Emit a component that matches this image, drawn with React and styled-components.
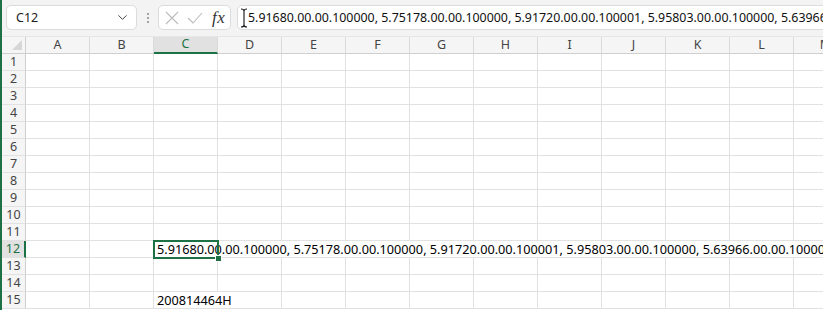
import React from "react";
import styled, { createGlobalStyle, css } from "styled-components";
import { ChevronDown } from "lucide-react";

const GREEN = "#1e7145";
const COLUMNS = ["A", "B", "C", "D", "E", "F", "G", "H", "I", "J", "K", "L", "M"];
const ROWS = Array.from({ length: 15 }, (_, i) => i + 1);

const LONG_VALUE =
  "5.91680.00.00.100000, 5.75178.00.00.100000, 5.91720.00.00.100001, 5.95803.00.00.100000, 5.63966.00.00.100000, 5.71234.00.00.100000";

const cells = {
  C12: LONG_VALUE,
  C15: "200814464H",
};

const GlobalStyle = createGlobalStyle`
  html, body {
    margin: 0;
    padding: 0;
    background: #fff;
  }
`;

const Frame = styled.div`
  width: 823px;
  height: 310px;
  overflow: hidden;
  box-sizing: border-box;
  border-left: 2px solid ${GREEN};
  background: #fff;
  font-family: "Noto Sans", "Open Sans", sans-serif;
`;

const Toolbar = styled.div`
  height: 37px;
  box-sizing: border-box;
  padding: 5px 0 0 4px;
  display: flex;
  align-items: flex-start;
  background: #f3f3f3;
`;

const Box = styled.div`
  height: 25px;
  box-sizing: border-box;
  background: #fff;
  border: 1px solid #dcdcdc;
  border-radius: 5px;
  display: flex;
  align-items: center;
`;

const NameBox = styled(Box)`
  width: 131px;
  padding: 0 6px 0 9px;
  justify-content: space-between;
  font-size: 12.5px;
  color: #222;
`;

const Dots = styled.div`
  width: 21px;
  height: 25px;
  display: flex;
  flex-direction: column;
  align-items: center;
  justify-content: center;
  gap: 2px;

  span {
    width: 2px;
    height: 2px;
    border-radius: 1px;
    background: #8a8a8a;
  }
`;

const FxBox = styled(Box)`
  width: 73px;
  padding: 0 0 0 6px;
  gap: 8px;
  margin-right: 6px;
`;

const FxLabel = styled.span`
  font-family: "Liberation Serif", "DejaVu Serif", serif;
  font-style: italic;
  font-size: 17px;
  color: #333;
  margin-left: 1px;
  letter-spacing: 0.5px;
`;

const FormulaBox = styled(Box)`
  flex: 1;
  position: relative;
  margin-right: -12px;
  padding-left: 10px;
  font-size: 12.4px;
  color: #111;
  white-space: nowrap;
  overflow: hidden;
`;

const Cursor = styled.svg`
  position: absolute;
  left: 2px;
  top: 2px;
`;

const Grid = styled.div`
  display: grid;
  grid-template-columns: 24px repeat(${COLUMNS.length}, 64px);
  grid-auto-rows: 17px;
  width: max-content;
  border-top: 1px solid #e6e6e6;
  margin-top: -1px;
`;

const headerActive = css`
  background: #e1e1e1;
  color: ${GREEN};
`;

const Corner = styled.div`
  position: relative;
  background: #f5f5f5;
  border-right: 1px solid #cfcfcf;
  border-bottom: 1px solid #cfcfcf;
  box-sizing: border-box;

  &::after {
    content: "";
    position: absolute;
    right: 3px;
    bottom: 3px;
    border-left: 10px solid transparent;
    border-bottom: 10px solid #d6d6d6;
  }
`;

const ColHeader = styled.div`
  box-sizing: border-box;
  background: #f5f5f5;
  border-right: 1px solid #dadada;
  border-bottom: 1px solid #cfcfcf;
  font-size: 12.5px;
  color: #444;
  display: flex;
  align-items: center;
  justify-content: center;
  line-height: 1;
  ${(p) =>
    p.$active &&
    css`
      ${headerActive};
      border-bottom: 2px solid ${GREEN};
    `}
`;

const RowHeader = styled.div`
  box-sizing: border-box;
  background: #f5f5f5;
  border-right: 1px solid #cfcfcf;
  border-bottom: 1px solid #e1e1e1;
  font-size: 12.5px;
  color: #444;
  display: flex;
  align-items: center;
  justify-content: center;
  line-height: 1;
  ${(p) =>
    p.$active &&
    css`
      ${headerActive};
      border-right: 2px solid ${GREEN};
    `}
`;

const Cell = styled.div`
  position: relative;
  box-sizing: border-box;
  border-right: 1px solid #e1e1e1;
  border-bottom: 1px solid #e1e1e1;
`;

const CellText = styled.span`
  position: absolute;
  z-index: 1;
  left: 0;
  top: 0;
  height: 16px;
  padding: 0 3px;
  box-sizing: border-box;
  background: #fff;
  display: flex;
  align-items: flex-end;
  font-size: 12.7px;
  line-height: 16px;
  color: #000;
  white-space: nowrap;
`;

const Selection = styled.div`
  position: absolute;
  z-index: 2;
  left: -1px;
  top: -1px;
  width: 66px;
  height: 19px;
  box-sizing: border-box;
  border: 2px solid ${GREEN};
  pointer-events: none;

  &::after {
    content: "";
    position: absolute;
    right: -5px;
    bottom: -5px;
    width: 5px;
    height: 5px;
    background: ${GREEN};
    border: 1px solid #fff;
  }
`;

function Toolbox() {
  return (
    <Toolbar>
      <NameBox>
        <span>C12</span>
        <ChevronDown size={15} strokeWidth={1.6} color="#444" />
      </NameBox>
      <Dots>
        <span />
        <span />
        <span />
      </Dots>
      <FxBox>
        <svg width="14" height="14" viewBox="0 0 14 14">
          <path d="M1 1 L13 13 M13 1 L1 13" stroke="#bcbcbc" strokeWidth="1.1" fill="none" />
        </svg>
        <svg width="16" height="12" viewBox="0 0 16 12">
          <path d="M1 6 L6 11 L15 1" stroke="#bcbcbc" strokeWidth="1.1" fill="none" />
        </svg>
        <FxLabel>fx</FxLabel>
      </FxBox>
      <FormulaBox>
        <Cursor width="8" height="20" viewBox="0 0 8 20">
          <path
            d="M1 1 Q4 1 4 3 L4 17 Q4 19 1 19 M7 1 Q4 1 4 3 M4 17 Q4 19 7 19"
            stroke="#111"
            strokeWidth="1.1"
            fill="none"
          />
        </Cursor>
        {LONG_VALUE}
      </FormulaBox>
    </Toolbar>
  );
}

export default function App() {
  return (
    <>
      <GlobalStyle />
      <Frame>
        <Toolbox />
        <Grid>
          <Corner />
          {COLUMNS.map((c) => (
            <ColHeader key={c} $active={c === "C"}>
              {c}
            </ColHeader>
          ))}
          {ROWS.map((r) => (
            <React.Fragment key={r}>
              <RowHeader $active={r === 12}>{r}</RowHeader>
              {COLUMNS.map((c) => {
                const id = c + r;
                return (
                  <Cell key={id}>
                    {cells[id] && <CellText>{cells[id]}</CellText>}
                    {id === "C12" && <Selection />}
                  </Cell>
                );
              })}
            </React.Fragment>
          ))}
        </Grid>
      </Frame>
    </>
  );
}
